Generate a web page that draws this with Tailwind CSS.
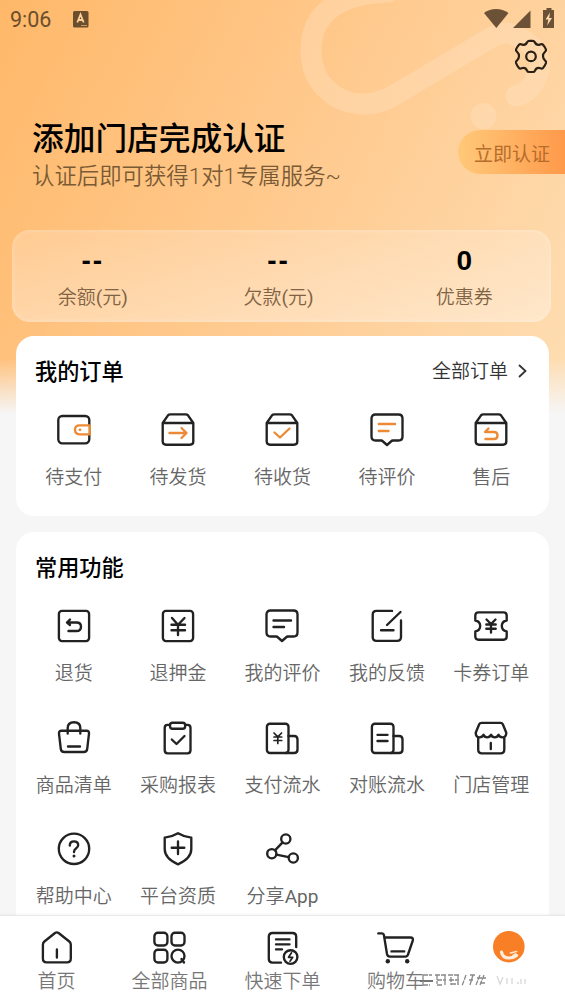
<!DOCTYPE html>
<html lang="zh-CN">
<head>
<meta charset="utf-8">
<title>我的</title>
<script src="https://cdn.jsdelivr.net/npm/@tailwindcss/browser@4"></script>
</head>
<body class="bg-[#f6f6f6]">
<div class="relative flex h-[1004px] w-[565px] flex-col overflow-hidden font-['Roboto','Noto_Sans_CJK_SC',sans-serif] text-[#666]">
  <!-- header backdrop -->
  <div class="absolute inset-x-0 top-0 h-[420px] bg-linear-[118deg] from-[#ffb869] via-[#ffca8f] via-50% to-[#fedeb4]"></div>
  <div class="absolute inset-x-0 top-[358px] h-[62px] bg-linear-to-b from-[#f6f6f6]/0 to-[#f6f6f6] to-90%"></div>
  <svg class="absolute left-0 top-0" width="565" height="200" fill="none" stroke-linecap="round" stroke-linejoin="round">
    <defs><mask id="m" maskUnits="userSpaceOnUse" x="0" y="0" width="565" height="200"><path d="M388 -8C340 -6 311 12 311 50C311 85 337 104 364 104C378 104 388 99 398 93L487 40C502 31 510 31 520 38C542 50 544 66 534 82C530 89 524 94 516 96" stroke="#fff" stroke-width="21"/><circle cx="483.500" cy="116" r="13" fill="#fff"/></mask></defs>
    <rect width="565" height="200" fill="#ffe3c4" fill-opacity=".36" mask="url(#m)"/>
  </svg>

  <header class="relative flex h-[230px] flex-col">
    <div class="flex h-[38px] items-center text-[21.500px] leading-[38px] text-[#6b4e2c]">
      <span class="ml-[10px] pt-[2px]">9:06</span>
      <svg class="ml-[22px]" width="16" height="17"><rect width="15.500" height="16.500" rx="1.500" fill="#6b4e2c"/><path d="M4.300 11.500L7.500 3.500L10.700 11.500M5.400 9H9.600" stroke="#ffd09a" stroke-width="1.800" fill="none"/><path d="M8 14.500h6" stroke="#c89a66" stroke-width="1"/></svg>
      <svg class="ml-auto" width="81" height="38" fill="#6b5236"><path d="M0 13C7 7.500 17 7.500 24.500 13L12.300 28Z"/><path d="M46.500 10.500V28H29Z"/><path d="M62.500 8h5v2h2.500v18H59V10h3.500z"/><path d="M66 12.500L61.500 19.500H64.300L63.200 25.500L68 18H65.200Z" fill="#ffd9ac"/></svg>
    </div>
    <div class="flex h-[80px] justify-end pr-[14px]">
      <svg class="-mt-[2px]" width="40" height="40" viewBox="0 0 40 40" fill="none" stroke="#2a2015" stroke-width="2.200" stroke-linejoin="round"><path d="M16.200 6Q17 4.800 18.300 4.800H21.700Q23 4.800 23.700 6Q25 9.300 28.300 8.800Q31 7.500 32 8.700Q34 10.800 35 13.600Q35.300 14.900 34 15.800Q31.700 18 32 20.300Q32 22.700 34.200 24.700Q35.400 25.700 35 27Q34 29.800 32 32Q31 33 29.500 32.300Q25.500 31 23.900 34.700Q23.300 36 21.900 36H18.100Q16.700 36 16.100 34.700Q14.500 31 10.500 32.300Q9 33 8 32Q6 29.800 5 27Q4.600 25.700 5.800 24.700Q8 22.700 8 20.300Q8.300 18 6 15.800Q4.700 14.900 5 13.600Q6 10.800 8 8.700Q9 7.500 11.700 8.800Q15 9.300 16.200 6Z"/><circle cx="20" cy="20.400" r="4.800"/></svg>
    </div>
    <div class="flex items-start justify-between pl-[32px]">
      <div class="pt-[2px]">
        <h1 class="text-[31.700px] font-medium leading-[40px] text-black">添加门店完成认证</h1>
        <p class="-mt-[1px] text-[22.400px] font-[350] leading-[34px] text-[#795a35]">认证后即可获得1对1专属服务~</p>
      </div>
      <button class="mt-[12px] h-[44px] w-[107px] rounded-l-full bg-linear-to-r from-[#ffc979] to-[#ff994a] pl-[16px] text-left text-[19px] leading-[49px] text-[#b66c2b]">立即认证</button>
    </div>
  </header>

  <section class="relative mx-[12px] mr-[14px] h-[92px] shrink-0 rounded-[18px] bg-linear-to-b from-white/20 to-white/35 shadow-[inset_0_0_5px_rgba(255,255,255,.35)]">
    <div class="-ml-[12px] -mr-[6px] grid grid-cols-3 pt-[13px] text-center">
      <div><div class="h-[36px] font-['Liberation_Sans',sans-serif] text-[28px] font-bold leading-[36px] tracking-[2px] text-black">--</div><div class="text-[19px] font-[350] leading-[38px] text-[#806345]">余额<span class="font-normal">(</span>元<span class="font-normal">)</span></div></div>
      <div><div class="h-[36px] font-['Liberation_Sans',sans-serif] text-[28px] font-bold leading-[36px] tracking-[2px] text-black">--</div><div class="text-[19px] font-[350] leading-[38px] text-[#806345]">欠款<span class="font-normal">(</span>元<span class="font-normal">)</span></div></div>
      <div><div class="h-[36px] font-['Liberation_Sans',sans-serif] text-[28px] font-bold leading-[36px] text-black">0</div><div class="text-[19px] font-[350] leading-[38px] text-[#806345]">优惠券</div></div>
    </div>
  </section>

  <section class="relative mx-[16px] mt-[14px] h-[180px] shrink-0 rounded-[18px] bg-white">
    <div class="flex h-[70px] items-center justify-between pl-[19px] pr-[22px] pt-[3px]">
      <h2 class="text-[22.200px] font-medium text-black">我的订单</h2>
      <a class="flex items-center gap-[10px] text-[19px] font-[350] text-[#333]">全部订单<svg class="-mt-[3px]" width="9" height="16" fill="none" stroke="#333" stroke-width="1.800"><path d="M1 2L7.500 8L1 14"/></svg></a>
    </div>
    <ul id="orders" class="mx-[5.500px] grid grid-cols-5"></ul>
  </section>

  <section class="relative mx-[16px] mt-[16px] h-[420px] shrink-0 rounded-[18px] bg-white">
    <h2 class="h-[70px] pl-[19px] text-[22.200px] font-medium leading-[72px] text-black">常用功能</h2>
    <ul id="tools" class="mx-[5.500px] grid grid-cols-5"></ul>
  </section>

  <nav class="absolute inset-x-0 bottom-0 h-[89px] border-t border-[#e8e8e8] bg-white shadow-[0_-1px_2px_rgba(0,0,0,.04)]">
    <ul id="tabs" class="grid grid-cols-5"></ul>
    <!-- watermark strip over the last tab label -->
    <svg class="absolute left-[420px] top-[54px]" width="108" height="20" fill="none" stroke="#888" stroke-width="1.300"><path d="M0 11H13" stroke="#666" stroke-width="1.800"/><path d="M3 5h9M3 5v10M3 15h7M15 5h11M17 5v9M17 10h9M25 5v10M17 15h5M28 5h11M29 10h10M31 7v8M31 14h8M38 5v8M46 5l-4 11M50 5h5M53 5l-3 10M49 10h4M60 5l-4 10M57 8h9M64 5l-4 10M60 13h6" stroke-dasharray="5 1"/><path d="M77 6l3 8 3-7M87 8v6M92 8v6M97 13h2M101 14V9M105 9v5" stroke="#d8d8d8"/></svg>
  </nav>
</div>

<script>
const K = '#222', O = '#ec8a35';
const box = '<path d="M4.700 13L10 5.300Q10.800 4.300 12.500 4.300H27.500Q29.200 4.300 30 5.300L35.300 13V31.500Q35.300 34.700 32 34.700H8Q4.700 34.700 4.700 31.500ZM4.700 13H35.300"/>';
const bubble = '<path d="M8.500 4.500H31.500Q35.500 4.500 35.500 8.500V26.500Q35.500 30.500 31.500 30.500H26Q24.800 30.500 24 31.500L20 35L16 31.500Q15.200 30.500 14 30.500H8.500Q4.500 30.500 4.500 26.500V8.500Q4.500 4.500 8.500 4.500Z"/>';
const bill = '<rect x="4.900" y="5.700" width="21.600" height="29.300" rx="3"/><path d="M26.500 18H32Q35.500 18 35.500 21.500V31.500Q35.500 35 32 35H24"/>';
const orders = [
 ['待支付','<rect x="4.300" y="6" width="31" height="27.300" rx="4"/><path d="M35.500 15.300H25.500Q21 15.300 21 19.800Q21 24.300 25.500 24.300H35.500Z" fill="#fff" stroke="'+O+'"/><circle cx="26" cy="19.800" r="1.400" fill="'+O+'" stroke="none"/>'],
 ['待发货', box+'<path stroke="'+O+'" d="M11.500 23H28M23.500 18L28.500 23L23.500 28"/>'],
 ['待收货', box+'<path stroke="'+O+'" d="M12.500 22.500L18 27.500L27.500 18.500"/>'],
 ['待评价', bubble+'<path stroke="'+O+'" d="M11.800 14H28M11.800 21H21.500"/>'],
 ['售后', box+'<path stroke="'+O+'" d="M17.500 18.500L14 22H23Q26.500 22 26.500 25.500Q26.500 29 23 29H14.500"/>']
];
const tools = [
 ['退货','<rect x="4.900" y="4.900" width="30.200" height="30.200" rx="3"/><path d="M13 16.500H22.500Q27 16.500 27 20.700Q27 25 22.500 25H14.500M16 13.500L13 16.500L16 19"/>'],
 ['退押金','<rect x="4.900" y="4.900" width="30.200" height="30.200" rx="3"/><path d="M14 12L20 18.700L26.500 12M20 18.700V29M13.500 18.700H27M13.500 24.200H27"/>'],
 ['我的评价', bubble+'<path d="M11.500 14.500H29M11.500 21H22"/>'],
 ['我的反馈','<path d="M25 4.900H9.500Q5.700 4.900 5.700 8.700V31Q5.700 34.800 9.500 34.800H30Q34 34.800 34 31V14.500M33.500 6L20 19M14 24.200H26.500"/>'],
 ['卡券订单','<path d="M7.500 6.300H32.500Q35.700 6.300 35.700 9.500V14.500Q30.800 15.500 30.800 20Q30.800 24.500 35.700 25.500V30.500Q35.700 33.700 32.500 33.700H7.500Q4.300 33.700 4.300 30.500V25.500Q9.200 24.500 9.200 20Q9.200 15.500 4.300 14.500V9.500Q4.300 6.300 7.500 6.300Z"/><path d="M15.500 13.500L20 18L24.500 13.500M20 18V26.500M15.300 18.500H24.700M15.300 22.700H24.700"/>'],
 ['商品清单','<path d="M7.500 12.700H32.500Q35.300 12.700 35 15.700L33.200 31Q32.800 34 29.800 34H10.200Q7.200 34 6.800 31L5 15.700Q4.700 12.700 7.500 12.700ZM13.700 15.500V10Q13.700 4.200 20 4.200Q26.300 4.200 26.300 10V15.500M14 28.500H26"/>'],
 ['采购报表','<path d="M12 6.900H9.500Q6.700 6.900 6.700 9.900V32.300Q6.700 35.300 9.700 35.300H29.500Q32.500 35.300 32.500 32.300V9.900Q32.500 6.900 29.500 6.900H27"/><rect x="12" y="4.700" width="15.200" height="6" rx="2.500"/><path d="M13.800 21.500L18.500 26L26.500 18"/>'],
 ['支付流水', bill+'<path d="M12 15L15.800 18.800L19.600 15M15.800 18.800V25.500M12 19H19.700M12 22.500H19.700" stroke-width="1.700"/>'],
 ['对账流水', bill+'<path d="M10.500 16.800H20.500M10.500 23H20.500"/>'],
 ['门店管理','<path d="M7.200 19.500V31.500Q7.200 35.300 11 35.300H29.500Q33.300 35.300 33.300 31.500V19.500M10.500 4.800H29.500Q31.200 4.800 31.800 6.200L35.300 14.700Q35.300 19.300 31.500 19.300Q28.500 19.300 27.500 16.800Q26.500 19.300 23.900 19.300Q21 19.300 20 16.800Q19 19.300 16.100 19.300Q13.500 19.300 12.500 16.800Q11.500 19.300 8.500 19.300Q4.700 19.300 4.700 14.700L8.200 6.200Q8.800 4.800 10.500 4.800ZM19.800 25V31"/>'],
 ['帮助中心','<circle cx="20" cy="19.800" r="15.200"/><path d="M15.800 16.500Q15.800 12.300 20 12.300Q24.200 12.300 24.200 16Q24.200 18 22 19.500Q20 20.800 20 23"/><circle cx="20" cy="27" r="1.500" fill="#222" stroke="none"/>'],
 ['平台资质','<path d="M20 4.200Q26.500 8 33.300 8.700V20Q33.300 29.500 20 35.300Q6.700 29.500 6.700 20V8.700Q13.500 8 20 4.200ZM20 12.500V25M13.700 18.700H26.300"/>'],
 ['分享<span class="font-normal">App</span>','<circle cx="23.800" cy="10" r="4.600"/><circle cx="9.800" cy="24.700" r="4.600"/><circle cx="31.300" cy="29" r="4.600"/><path d="M20.600 13.400L13 21.400M14.400 25.600L26.700 28.100"/>']
];
const tabs = [
 ['首页','<path d="M18 5Q19.800 3.800 21.600 5L32.300 13.500Q33.800 14.700 33.800 16.700V30.500Q33.800 34.400 30 34.400H9.700Q5.900 34.400 5.900 30.500V16.700Q5.900 14.700 7.400 13.500ZM19.900 21.500V29.500"/>'],
 ['全部商品','<rect x="4.400" y="4.700" width="13" height="12.800" rx="3.500"/><rect x="21.500" y="4.700" width="13" height="12.800" rx="3.500"/><rect x="4.400" y="21.700" width="13" height="12.800" rx="3.500"/><circle cx="28" cy="28.100" r="6.500"/><path d="M31.500 31L34 34.500"/>'],
 ['快速下单','<path d="M18 34.600H9.500Q5.800 34.600 5.800 31V8.700Q5.800 5 9.500 5H29.500Q33.200 5 33.200 8.700V19M13 11.300H26.500M13 16.300H26.500M13 21.300H19"/><circle cx="27.600" cy="29" r="6.800"/><path d="M28.500 24.800L25.500 29.300H29.700L27 33.200" stroke-width="1.700"/>'],
 ['购物车','<path d="M2.300 5.400H6Q7.600 5.400 7.900 7L11 26Q11.500 28.600 14 28.600H29.500Q31.500 28.600 32.200 26L36.800 12.500Q37.500 9.500 34.500 9.500H8.500M15.500 23.400H28.200"/><circle cx="11.800" cy="33.300" r="2.200" fill="#222" stroke="none"/><circle cx="31.200" cy="33.300" r="2.200" fill="#222" stroke="none"/>'],
 ['','<circle cx="19.800" cy="18.700" r="15.800" fill="#f97f26" stroke="none"/><path d="M12.500 24Q13.500 30 20 30Q24.500 30 27.500 27.500" stroke="#ffeedd" stroke-width="3.200"/><path d="M21.500 25L27.500 23.500M24 27.500L26.500 26" stroke="#ffe6cc" stroke-width="1.700"/>']
];
const svg = (p) => `<svg class="shrink-0" width="40" height="40" viewBox="0 0 40 40" fill="none" stroke="${K}" stroke-width="2.350" stroke-linecap="round" stroke-linejoin="round">${p}</svg>`;
document.getElementById('orders').innerHTML = orders.map(([t,p]) => `<li class="flex flex-col items-center pt-[4px]">${svg(p)}<span class="mt-[9px] text-[19px] font-[350] leading-[38px]">${t}</span></li>`).join('');
document.getElementById('tools').innerHTML = tools.map(([t,p]) => `<li class="flex h-[111.500px] flex-col items-center pt-[4px]">${svg(p)}<span class="mt-[9px] text-[19px] font-[350] leading-[38px]">${t}</span></li>`).join('');
document.getElementById('tabs').innerHTML = tabs.map(([t,p]) => `<li class="flex flex-col items-center pt-[12px]">${svg(p)}<span class="-mt-[5px] text-[19px] font-[350] leading-[38px] text-[#777]">${t}</span></li>`).join('');
</script>
</body>
</html>
